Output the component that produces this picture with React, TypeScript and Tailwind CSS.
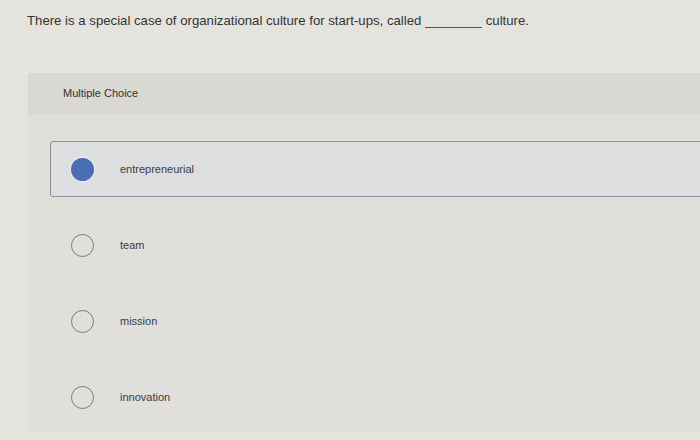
import React from "react";

const options = [
  { label: "entrepreneurial", selected: true },
  { label: "team", selected: false },
  { label: "mission", selected: false },
  { label: "innovation", selected: false },
];

function Radio({ selected }: { selected: boolean }) {
  if (selected) {
    return (
      <span className="block h-[23px] w-[23px] shrink-0 rounded-full bg-[#4a6db3] shadow-[0_0_0_2px_#e4e6ea]" />
    );
  }
  return (
    <span className="block h-[23px] w-[23px] shrink-0 rounded-full border-[1.5px] border-[#7a7a7a]" />
  );
}

export default function App() {
  return (
    <div
      className="flex h-[440px] w-[700px] flex-col overflow-hidden bg-[#e4e3de] text-[#3a3a3a]"
      style={{ fontFamily: '"Liberation Sans", Arial, sans-serif' }}
    >
      <p className="pl-[27px] pt-[12px] text-[13.2px] leading-[18px] text-[#333]">
        There is a special case of organizational culture for start-ups, called{" "}
        <span className="inline-block w-[57px] translate-y-[3px] border-b border-[#555]" />{" "}
        culture.
      </p>

      <section className="ml-[28px] mt-[43px] flex h-[359px] flex-col bg-[#dfded9]">
        <div className="flex h-[41px] shrink-0 items-center bg-[#d9d8d3] pl-[35px] text-[11px] text-[#333]">
          Multiple Choice
        </div>
        <div className="-mr-[10px] flex flex-col gap-[20px] pl-[22px] pt-[27px]">
          {options.map((o) => (
            <div
              key={o.label}
              className={
                o.selected
                  ? "flex h-[56px] items-center rounded-[3px] border border-[#8e9199] bg-[#dcdee0] pl-[20px]"
                  : "flex h-[56px] items-center bg-[#e0dfdb] pl-[21px]"
              }
            >
              <Radio selected={o.selected} />
              <span className="ml-[26px] text-[11px] text-[#3c3c3c]">{o.label}</span>
            </div>
          ))}
        </div>
      </section>
    </div>
  );
}
